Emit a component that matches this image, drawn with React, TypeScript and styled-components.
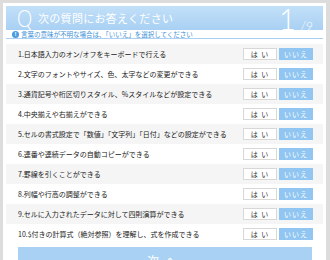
import React from 'react'
import styled, { createGlobalStyle } from 'styled-components'

const QUESTIONS = [
  '1.日本語入力のオン/オフをキーボードで行える',
  '2.文字のフォントやサイズ、色、太字などの変更ができる',
  '3.通貨記号や桁区切りスタイル、%スタイルなどが設定できる',
  '4.中央揃えや右揃えができる',
  '5.セルの書式設定で「数値」「文字列」「日付」などの設定ができる',
  '6.連番や連続データの自動コピーができる',
  '7.罫線を引くことができる',
  '8.列幅や行高の調整ができる',
  '9.セルに入力されたデータに対して四則演算ができる',
  '10.$付きの計算式（絶対参照）を理解し、式を作成できる',
]

const GlobalStyle = createGlobalStyle`
  html, body {
    margin: 0;
    padding: 0;
    background: #dcdcdc;
    overflow: hidden;
  }
  body {
    font-family: "Noto Sans CJK JP", "Noto Sans", sans-serif;
  }
`

const Panel = styled.div`
  margin: 3px 4px 0 3px;
  padding: 3px 3px 0;
  height: 260px;
  background: #fff;
  box-sizing: border-box;
`

const Header = styled.div`
  display: flex;
  align-items: center;
  height: 24px;
  padding: 0 10px 0 11px;
  background: linear-gradient(to bottom, #c2e0f8, #a9d0f3);
  color: #fff;
`

const QMark = styled.span`
  font-family: "Lato", "DejaVu Sans", sans-serif;
  font-weight: 300;
  font-size: 24px;
  line-height: 1;
  width: 21px;
  transform: scaleX(0.8);
  transform-origin: left center;
`

const Title = styled.span`
  flex: 1;
  font-size: 11px;
  letter-spacing: 0.3px;
  line-height: 1;
`

const Counter = styled.div`
  display: flex;
  align-items: baseline;
  font-family: "Lato", "Liberation Sans", sans-serif;
  font-weight: 300;
`

const Current = styled.span`
  font-size: 29px;
  line-height: 1;
  margin-right: 5px;
`

const Total = styled.span`
  font-size: 12px;
  line-height: 1;
`

const Info = styled.div`
  display: flex;
  align-items: center;
  gap: 2px;
  height: 8px;
  padding: 0 0 0 6px;
  margin-bottom: 5px;
  border-bottom: 1px solid #a9d0f3;
  color: #3b8fd9;
  font-size: 6.5px;
  line-height: 8px;
  white-space: nowrap;
`

const InfoIcon = styled.span`
  display: inline-flex;
  justify-content: center;
  align-items: center;
  width: 7px;
  height: 7px;
  border-radius: 50%;
  background: #4a9ae0;
  color: #fff;
  font-family: "Liberation Sans", sans-serif;
  font-weight: bold;
  font-size: 6px;
  line-height: 7px;
`

const Row = styled.div<{ $striped: boolean }>`
  display: flex;
  align-items: center;
  height: 20px;
  padding: 0 10px 0 12px;
  background: ${(p) => (p.$striped ? '#f5f5f5' : '#fff')};
`

const Label = styled.span`
  flex: 1;
  font-size: 7px;
  color: #222;
  white-space: nowrap;
`

const Choice = styled.span<{ $active?: boolean }>`
  display: inline-flex;
  justify-content: center;
  align-items: center;
  width: 34px;
  height: 12px;
  box-sizing: border-box;
  margin-left: 2px;
  font-size: 7px;
  letter-spacing: 1px;
  border: 1px solid ${(p) => (p.$active ? '#90c6f1' : '#d8d8d8')};
  background: ${(p) => (p.$active ? '#90c6f1' : '#fff')};
  color: ${(p) => (p.$active ? '#fff' : '#333')};
`

const NextButton = styled.div`
  display: flex;
  justify-content: center;
  margin: 3px 11px 0 12px;
  height: 26px;
  padding-top: 5px;
  box-sizing: border-box;
  background: #a9d1f3;
  color: #fff;
  font-size: 12px;
  letter-spacing: 6px;
`

export default function App() {
  return (
    <>
      <GlobalStyle />
      <Panel>
        <Header>
          <QMark>Q</QMark>
          <Title>次の質問にお答えください</Title>
          <Counter>
            <Current>1</Current>
            <Total>/9</Total>
          </Counter>
        </Header>
        <Info>
          <InfoIcon>!</InfoIcon>
          言葉の意味が不明な場合は、「いいえ」を選択してください
        </Info>
        {QUESTIONS.map((q, i) => (
          <Row key={q} $striped={i % 2 === 0}>
            <Label>{q}</Label>
            <Choice>は い</Choice>
            <Choice $active>いいえ</Choice>
          </Row>
        ))}
        <NextButton>次へ</NextButton>
      </Panel>
    </>
  )
}
